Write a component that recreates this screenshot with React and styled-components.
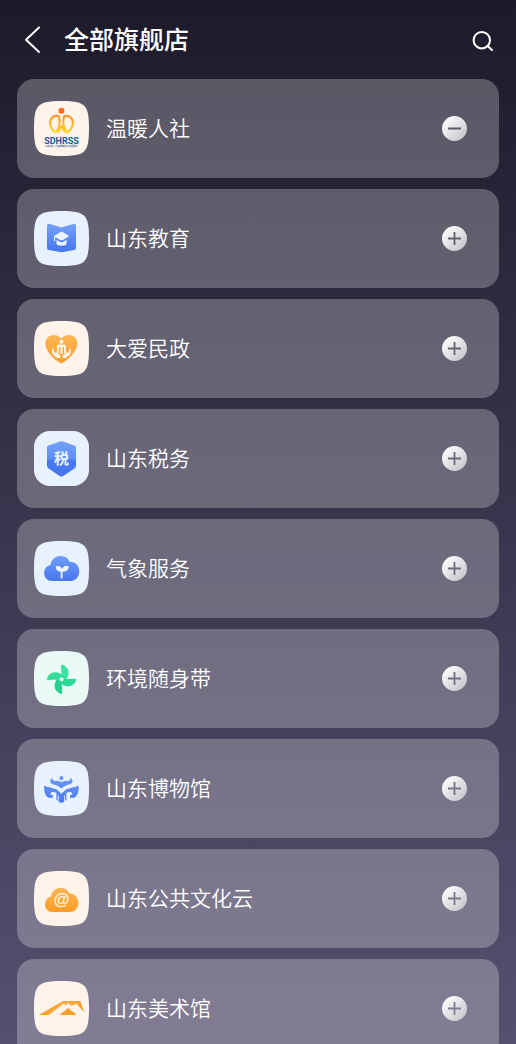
import React, { useState } from 'react';
import styled, { createGlobalStyle } from 'styled-components';

const GlobalStyle = createGlobalStyle`
    * {
        box-sizing: border-box;
    }

    body {
        margin: 0;
        background-color: #1e1b2d;
        font-family: "Noto Sans CJK SC", "Noto Sans", sans-serif;
    }
`;

const Screen = styled.div`
    display: flex;
    flex-direction: column;
    height: 100vh;
    background: linear-gradient(180deg, #1d1a2b 0%, #565070 100%);
    color: #fff;
`;

const Header = styled.header`
    display: flex;
    flex-shrink: 0;
    align-items: center;
    height: 79px;
    padding: 0 21px;
`;

const HeaderButton = styled.button`
    display: flex;
    padding: 0;
    border: none;
    background: none;
    color: inherit;
    cursor: pointer;
`;

const Title = styled.h1`
    flex: 1;
    margin: 0 0 0 20px;
    padding-bottom: 4px;
    font-size: 25px;
    font-weight: 500;
    line-height: 36px;
`;

const List = styled.ul`
    display: flex;
    flex: 1;
    flex-direction: column;
    gap: 11px;
    min-height: 0;
    margin: 0;
    padding: 0 17px 17px;
    overflow-y: auto;
    list-style: none;
    scrollbar-width: none;
`;

const Card = styled.li`
    display: flex;
    flex-shrink: 0;
    align-items: center;
    gap: 17px;
    padding: 22px 32px 22px 17px;
    border-radius: 17px;
    background-color: rgba(255, 255, 255, 0.26);
`;

const Tile = styled.svg`
    display: block;
    flex-shrink: 0;
    width: 55px;
    height: 55px;
`;

const Name = styled.h2`
    flex: 1;
    margin: 0;
    padding-bottom: 4px;
    font-size: 21px;
    font-weight: 350;
    line-height: 30px;
`;

const ToggleButton = styled.button`
    display: flex;
    padding: 0;
    border: none;
    border-radius: 50%;
    background: none;
    cursor: pointer;
`;

// soft square behind every logo
const SQUIRCLE = [
    'M0 27.5C0 21 0.3 16 1.2 12C2.6 5.8 5.8 2.6 12 1.2C16 0.3 21 0 27.5 0',
    'C34 0 39 0.3 43 1.2C49.2 2.6 52.4 5.8 53.8 12C54.7 16 55 21 55 27.5',
    'C55 34 54.7 39 53.8 43C52.4 49.2 49.2 52.4 43 53.8C39 54.7 34 55 27.5 55',
    'C21 55 16 54.7 12 53.8C5.8 52.4 2.6 49.2 1.2 43C0.3 39 0 34 0 27.5Z',
].join('');

function Gradient({ id, from, to }) {
    return (
        <linearGradient id={id} x1="0" y1="0" x2="0" y2="1">
            <stop offset="0" stopColor={from} />
            <stop offset="1" stopColor={to} />
        </linearGradient>
    );
}

function SocialLogo() {
    return (
        <Tile viewBox="0 0 110 110" aria-hidden="true">
            <defs>
                <linearGradient id="social" gradientUnits="userSpaceOnUse" x1="0" y1="26" x2="0" y2="64">
                    <stop offset="0" stopColor="#f98b1d" />
                    <stop offset="1" stopColor="#ffd91c" />
                </linearGradient>
            </defs>
            <path transform="scale(2)" d={SQUIRCLE} fill="#fff3ea" />
            <circle cx="55" cy="19.5" r="5.8" fill="#f96b20" />
            <g fill="none" stroke="url(#social)" strokeWidth="4" strokeLinejoin="round">
                <path d="M49.5 30C38 28 31 36 32.5 47C34 55 38 60 44 62.5C50 55 53 42 49.5 30Z" />
                <path d="M60.5 30C72 28 79 36 77.5 47C76 55 72 60 66 62.5C60 55 57 42 60.5 30Z" />
                <path d="M48 63L55 50L62 63" />
            </g>
            <text x="55" y="85" textAnchor="middle" fontFamily="Roboto, sans-serif" fontWeight="700" fontSize="18" fill="#17599c">SDHRSS</text>
            <text x="55" y="92" textAnchor="middle" fontSize="5" fontWeight="500" fill="#17599c">山东省人力资源和社会保障厅</text>
        </Tile>
    );
}

function EducationLogo() {
    return (
        <Tile viewBox="0 0 55 55" aria-hidden="true">
            <defs><Gradient id="edu" from="#76a1fb" to="#4675ee" /></defs>
            <path d={SQUIRCLE} fill="#e8f1fe" />
            <path d="M13 15C13 13.2 14.4 12.4 16 12.9L27.5 16.6L39 12.9C40.7 12.4 42 13.2 42 15V36.4C42 37.8 41.3 38.5 40 38.9L27.5 41.2L15 38.9C13.7 38.5 13 37.8 13 36.4Z" fill="url(#edu)" />
            <path d="M26.6 21.1Q27.6 20.6 28.6 21.1L34.5 24.6Q35.3 25.2 34.5 25.7L28.8 29Q27.6 29.6 26.4 29L20.5 25.8Q19.7 25.3 20.5 24.7Z" fill="#edf5ff" />
            <path d="M22.5 29L26.4 31.1Q27.6 31.7 28.8 31.1L32.6 28.9V32.6C32.6 35.6 22.5 35.6 22.5 32.6Z" fill="#edf5ff" />
            <path d="M20.6 26V29.8" stroke="#edf5ff" strokeWidth="1.2" strokeLinecap="round" />
        </Tile>
    );
}

function CivilLogo() {
    return (
        <Tile viewBox="0 0 55 55" aria-hidden="true">
            <defs><Gradient id="civil" from="#fdb654" to="#fb9d29" /></defs>
            <path d={SQUIRCLE} fill="#fff3ea" />
            <path d="M27.4 42.4C25.9 42.4 11.3 32.5 11.3 22.6C11.3 14 21.6 10.8 27.4 17.5C33.2 10.8 43.4 14 43.4 22.6C43.4 32.5 28.9 42.4 27.4 42.4Z" fill="url(#civil)" />
            <circle cx="27.4" cy="20.7" r="2" fill="#fff6ed" />
            <path d="M25 23.5H29.8C31.3 23.5 31.9 24.3 31.9 25.6V32H30V26H28.5V33H26.3V26H24.8V32H22.9V25.6C22.9 24.3 23.5 23.5 25 23.5Z" fill="#fff6ed" />
            <path d="M18.5 27.2C19.3 27.2 19.7 28 19.8 29.8L21 32L22 31.6L25.6 33.7C26.6 34.6 26.4 36 26.1 37.1H23.2L18.7 33.6C17.9 31.5 17.6 28.2 18.5 27.2Z" fill="#fff6ed" />
            <path d="M36.3 27.2C35.5 27.2 35.1 28 35 29.8L33.8 32L32.8 31.6L29.2 33.7C28.2 34.6 28.4 36 28.7 37.1H31.6L36.1 33.6C36.9 31.5 37.2 28.2 36.3 27.2Z" fill="#fff6ed" />
        </Tile>
    );
}

function TaxLogo() {
    return (
        <Tile viewBox="0 0 55 55" aria-hidden="true">
            <defs>
                <linearGradient id="tax" x1="0" y1="0" x2="0" y2="1">
                    <stop offset="0" stopColor="#74a0fa" />
                    <stop offset="0.5" stopColor="#5e8ff8" />
                    <stop offset="0.56" stopColor="#4678f1" />
                    <stop offset="1" stopColor="#4676ee" />
                </linearGradient>
            </defs>
            <rect width="55" height="55" rx="16" fill="#e8f1fe" />
            <path d="M26 10.6Q27.4 10 28.8 10.6L40.4 14.5Q42 15 42 16.6V34.6Q42 36.2 40.7 37.2L29.2 45Q27.4 46.1 25.6 45L14.3 37.2Q13 36.2 13 34.6V16.6Q13 15 14.6 14.5Z" fill="url(#tax)" />
            <text x="27.5" y="33" textAnchor="middle" fontSize="15" fontWeight="700" fill="#edf4ff">税</text>
        </Tile>
    );
}

function WeatherLogo() {
    return (
        <Tile viewBox="0 0 55 55" aria-hidden="true">
            <defs><Gradient id="weather" from="#719efb" to="#4876ef" /></defs>
            <path d={SQUIRCLE} fill="#e8f1fe" />
            <path d="M18.4 40C13.5 40 10.2 36.5 10.2 32C10.2 27.8 12.6 25 16.5 24C17.2 18.7 21 14.9 26.3 14.9C31 14.9 34.2 17 35.6 20.7C41.2 20.3 45.3 24.6 45.3 30C45.3 36 41.6 40 36.3 40Z" fill="url(#weather)" />
            <path d="M27.6 37.5V30" stroke="#edf5ff" strokeWidth="1.8" />
            <path d="M28.3 30.8C23.8 30.8 21.5 28.5 21.9 25.4C24.6 24.2 27.2 25.8 28 28C29 25.2 31.6 23.8 34.6 25.3C34.9 28.7 32.4 30.8 28.3 30.8Z" fill="#edf5ff" />
        </Tile>
    );
}

function EnvironmentLogo() {
    const blade = 'M27 14.3Q27 13.7 27.8 13.7C33.5 14.6 37.3 21.7 32.3 28.3H27.6Z';
    return (
        <Tile viewBox="0 0 55 55" aria-hidden="true">
            <path d={SQUIRCLE} fill="#eafaf6" />
            <path d={blade} fill="#3be3a0" />
            <path d={blade} fill="#2ed896" transform="rotate(90 27.6 28.3)" />
            <path d={blade} fill="#25cf8d" transform="rotate(180 27.6 28.3)" />
            <path d={blade} fill="#32dc99" transform="rotate(270 27.6 28.3)" />
            <circle cx="27.6" cy="28.3" r="4" fill="#2fd997" />
            <circle cx="27.6" cy="28.3" r="2" fill="#eafaf6" />
        </Tile>
    );
}

function MuseumLogo() {
    const wing = 'M10.2 24.4C13.5 26.4 19.2 26.4 22.8 28.6C24.6 29.8 25.2 31.2 25.3 33L22.4 31.8C20.4 30.6 17.6 30.6 16.6 32.2C16 33.4 16.6 34.2 18.8 34V36.8H14.8C10.7 34.4 9.8 29.3 10.2 24.4Z';
    return (
        <Tile viewBox="0 0 55 55" aria-hidden="true">
            <defs>
                <linearGradient id="museum" gradientUnits="userSpaceOnUse" x1="0" y1="15" x2="0" y2="42">
                    <stop offset="0" stopColor="#6d9af9" />
                    <stop offset="1" stopColor="#4a79ef" />
                </linearGradient>
            </defs>
            <path d={SQUIRCLE} fill="#e8f1fe" />
            <g fill="url(#museum)">
                <circle cx="27.4" cy="17.1" r="2.1" />
                <path d="M18.6 16.7C17.6 19.2 20.2 20.3 23.7 19.8Q27.4 22 31.1 19.8C34.6 20.3 37.2 19.2 36.2 16.7C39.4 18.5 39.3 21.7 36.4 23.2C32.7 23.6 30 25.1 27.4 27.6C24.8 25.1 22.1 23.6 18.4 23.2C15.5 21.7 15.4 18.5 18.6 16.7Z" />
                <path d={wing} />
                <path d={wing} transform="translate(54.8 0) scale(-1 1)" />
                <path d="M22.4 28.6L27.4 31.8L32.4 28.6V38.8L29.4 41.2L27.4 42L25.4 41.2L22.4 38.8Z" />
            </g>
            <path d="M22.6 27L27.4 31.8L32.2 27" fill="none" stroke="#e8f1fe" strokeWidth="1.2" />
            <path d="M24.2 42V34.5M30.6 42V34.5" stroke="#e8f1fe" strokeWidth="1" />
        </Tile>
    );
}

function CultureLogo() {
    return (
        <Tile viewBox="0 0 55 55" aria-hidden="true">
            <defs><Gradient id="culture" from="#fdb654" to="#fb9b25" /></defs>
            <path d={SQUIRCLE} fill="#fff3ea" />
            <path d="M18.5 41C14 41 11 37.8 11 33.5C11 29.5 13.4 26.3 17 25.4C17.8 20.3 21.5 16.8 26.5 16.8C30.8 16.8 34 19 35.3 22.6C40.5 22.2 44.3 26.4 44.3 31.6C44.3 37 41 41 35.9 41Z" fill="url(#culture)" />
            <text x="27.5" y="34" textAnchor="middle" fontFamily="Liberation Sans, sans-serif" fontSize="16" fontWeight="700" fill="#fff6ed">@</text>
        </Tile>
    );
}

function ArtLogo() {
    return (
        <Tile viewBox="0 0 55 55" aria-hidden="true">
            <defs>
                <linearGradient id="art" x1="0" y1="0" x2="1" y2="0">
                    <stop offset="0" stopColor="#fb9a20" />
                    <stop offset="0.6" stopColor="#fdab3f" />
                    <stop offset="1" stopColor="#fb9b25" />
                </linearGradient>
            </defs>
            <path d={SQUIRCLE} fill="#fff3ea" />
            <path d="M5 34L29 20H46.3L50.3 31.2L42.2 22.6L37.6 25L34.2 21.8L31.8 24.4L30 22.6L14.5 34Z" fill="url(#art)" />
            <path d="M25.4 34L34.3 27L42.6 34Z" fill="#fc9d26" />
        </Tile>
    );
}

// the sign is cut out of the disc, so the card shows through it
function ToggleIcon({ open }) {
    const disc = 'M12.5 0A12.5 12.5 0 0 1 12.5 25A12.5 12.5 0 0 1 12.5 0Z';
    const minus = 'M6 11.6H19V13.4H6Z';
    const plus = 'M6 11.6H11.6V6H13.4V11.6H19V13.4H13.4V19H11.6V13.4H6Z';
    return (
        <svg width="25" height="25" viewBox="0 0 25 25" aria-hidden="true">
            <defs>
                <linearGradient id="disc" x1="0.1" y1="0.1" x2="0.9" y2="0.9">
                    <stop offset="0" stopColor="#ffffff" />
                    <stop offset="1" stopColor="#c6c5ca" />
                </linearGradient>
            </defs>
            <path d={disc + (open ? minus : plus)} fill="url(#disc)" fillRule="evenodd" />
        </svg>
    );
}

const stores = [
    { name: '温暖人社', Logo: SocialLogo },
    { name: '山东教育', Logo: EducationLogo },
    { name: '大爱民政', Logo: CivilLogo },
    { name: '山东税务', Logo: TaxLogo },
    { name: '气象服务', Logo: WeatherLogo },
    { name: '环境随身带', Logo: EnvironmentLogo },
    { name: '山东博物馆', Logo: MuseumLogo },
    { name: '山东公共文化云', Logo: CultureLogo },
    { name: '山东美术馆', Logo: ArtLogo },
];

function App() {
    const [openStore, setOpenStore] = useState('温暖人社');

    const handleToggle = (name) => {
        setOpenStore(openStore === name ? '' : name);
    };

    return (
        <Screen>
            <GlobalStyle />
            <Header>
                <HeaderButton type="button" aria-label="返回">
                    <svg width="23" height="30" viewBox="0 0 23 30" aria-hidden="true">
                        <path d="M18 2.5L5 14.7L18 26.9" fill="none" stroke="currentColor" strokeWidth="2" strokeLinecap="round" strokeLinejoin="round" />
                    </svg>
                </HeaderButton>
                <Title>全部旗舰店</Title>
                <HeaderButton type="button" aria-label="搜索">
                    <svg width="24" height="24" viewBox="0 0 24 24" aria-hidden="true">
                        <circle cx="10.8" cy="12.2" r="8.2" fill="none" stroke="currentColor" strokeWidth="2" />
                        <path d="M16.6 18L21 22" stroke="currentColor" strokeWidth="2" strokeLinecap="round" />
                    </svg>
                </HeaderButton>
            </Header>
            <List>
                {stores.map(({ name, Logo }) => (
                    <Card key={name}>
                        <Logo />
                        <Name>{name}</Name>
                        <ToggleButton
                            type="button"
                            aria-label={name}
                            aria-expanded={openStore === name}
                            onClick={() => handleToggle(name)}
                        >
                            <ToggleIcon open={openStore === name} />
                        </ToggleButton>
                    </Card>
                ))}
            </List>
        </Screen>
    );
}

export default App;
